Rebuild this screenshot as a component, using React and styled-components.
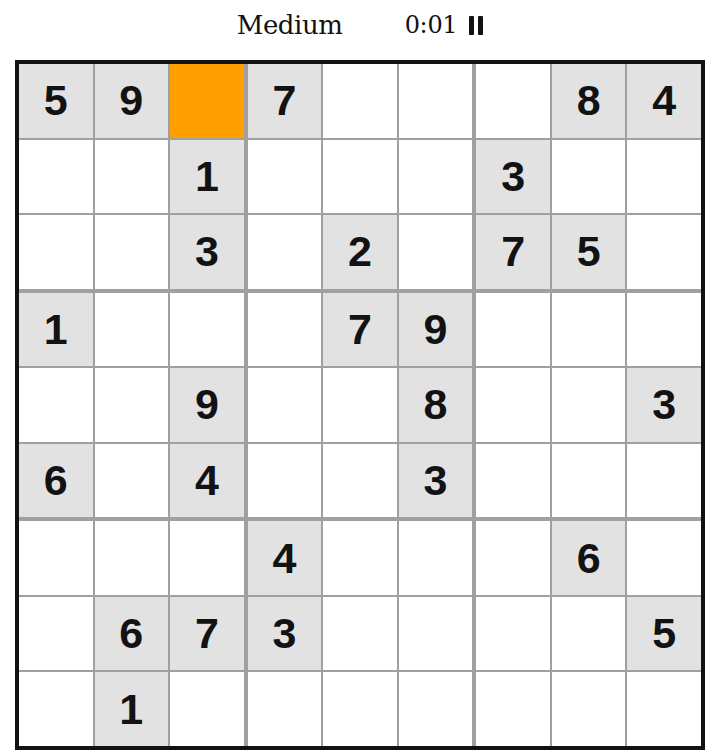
import styled, { createGlobalStyle } from "styled-components";

const GlobalStyle = createGlobalStyle`
  body {
    margin: 0;
    background: #ffffff;
  }
`;

const Page = styled.div`
  width: 720px;
  height: 756px;
  display: flex;
  flex-direction: column;
  align-items: center;
`;

const Header = styled.div`
  height: 50px;
  margin-bottom: 10px;
  display: flex;
  align-items: center;
  justify-content: center;
  gap: 62px;
  font-family: "DejaVu Serif", "Liberation Serif", serif;
  color: #121212;
`;

const Level = styled.span`
  font-size: 26px;
  letter-spacing: -0.4px;
`;

const Timer = styled.div`
  display: flex;
  align-items: center;
  gap: 12px;
  font-size: 24px;
  letter-spacing: -0.3px;
`;

const PauseIcon = styled.div`
  display: flex;
  gap: 4px;
  span {
    width: 5px;
    height: 19px;
    background: #121212;
    border-radius: 1px;
  }
`;

const Board = styled.div`
  width: 682px;
  height: 682px;
  border: 4px solid #121212;
  background: #a0a0a0;
  display: grid;
  grid-template-columns: repeat(3, 1fr);
  grid-template-rows: repeat(3, 1fr);
  gap: 4px;
`;

const Box = styled.div`
  display: grid;
  grid-template-columns: repeat(3, 1fr);
  grid-template-rows: repeat(3, 1fr);
  gap: 2px;
`;

const Cell = styled.div`
  display: flex;
  align-items: center;
  justify-content: center;
  background: ${(p) => (p.$selected ? "#ffa000" : p.$given ? "#e2e2e2" : "#ffffff")};
  font-family: "Liberation Sans", Arial, sans-serif;
  font-weight: 700;
  font-size: 43px;
  color: #121212;
`;

const puzzle = [
  "59.7...84",
  "..1...3..",
  "..3.2.75.",
  "1...79...",
  "..9..8..3",
  "6.4..3...",
  "...4...6.",
  ".673....5",
  ".1.......",
];

const selected = [0, 2];

export default function App() {
  const boxes = [];
  for (let b = 0; b < 9; b++) {
    const br = Math.floor(b / 3) * 3;
    const bc = (b % 3) * 3;
    const cells = [];
    for (let i = 0; i < 9; i++) {
      const r = br + Math.floor(i / 3);
      const c = bc + (i % 3);
      const v = puzzle[r][c];
      const isSel = r === selected[0] && c === selected[1];
      cells.push(
        <Cell key={i} $given={v !== "."} $selected={isSel}>
          {v !== "." ? v : ""}
        </Cell>
      );
    }
    boxes.push(<Box key={b}>{cells}</Box>);
  }

  return (
    <>
      <GlobalStyle />
      <Page>
        <Header>
          <Level>Medium</Level>
          <Timer>
            0:01
            <PauseIcon>
              <span />
              <span />
            </PauseIcon>
          </Timer>
        </Header>
        <Board>{boxes}</Board>
      </Page>
    </>
  );
}
